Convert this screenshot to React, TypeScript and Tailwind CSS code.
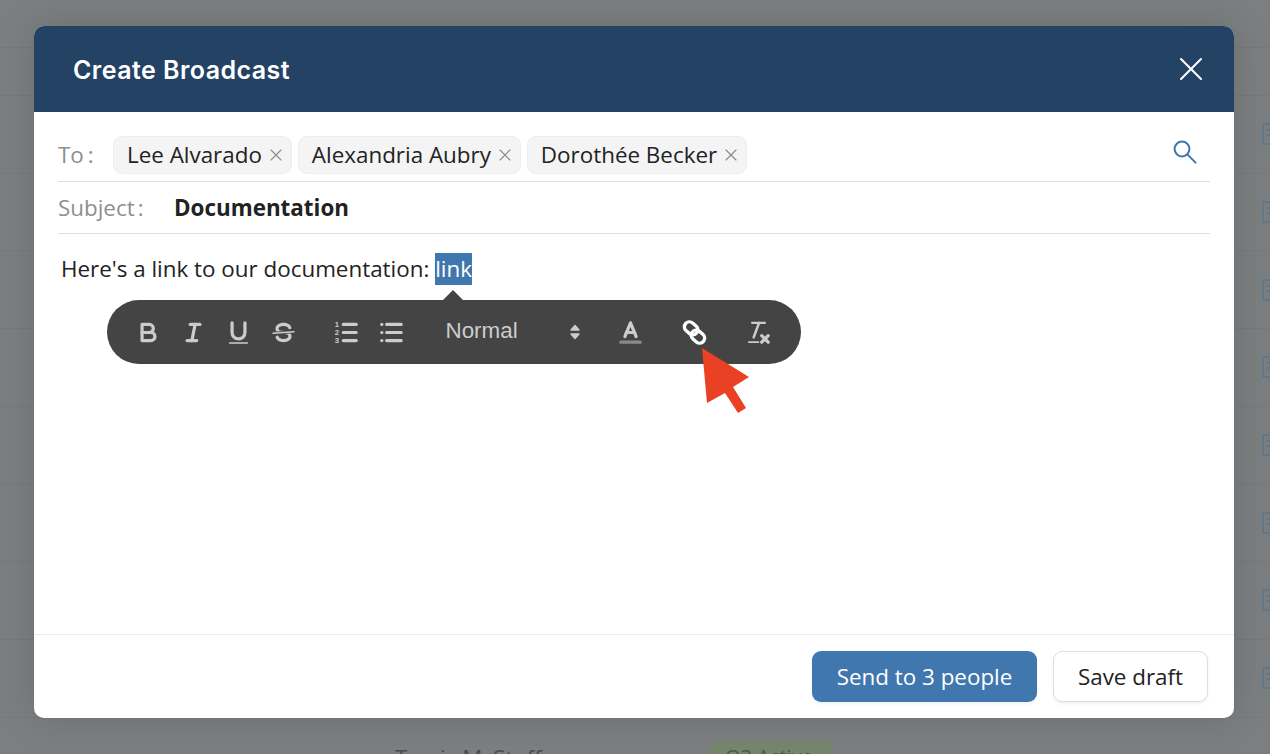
import { X } from 'lucide-react';

const rowKeys = [0, 1, 2, 3, 4, 5, 6, 7];

const tagNames = ['Lee Alvarado', 'Alexandria Aubry', 'Dorothée Becker'];

// Quill bubble toolbar icons, 18x18 grid
const ToolIcon = ({ children }: { children: React.ReactNode }) => (
  <svg
    viewBox="0 0 18 18"
    className="w-[29px] h-[29px]"
    fill="none"
    stroke="#ccc"
    strokeWidth="2"
    strokeLinecap="round"
    strokeLinejoin="round"
  >
    {children}
  </svg>
);

const BoldIcon = () => (
  <ToolIcon>
    <path d="M5,4H9.5A2.5,2.5,0,0,1,12,6.5v0A2.5,2.5,0,0,1,9.5,9H5V4Z" />
    <path d="M5,9h5.5A2.5,2.5,0,0,1,13,11.5v0A2.5,2.5,0,0,1,10.5,14H5V9Z" />
  </ToolIcon>
);

const ItalicIcon = () => (
  <ToolIcon>
    <line x1="7" x2="13" y1="4" y2="4" />
    <line x1="5" x2="11" y1="14" y2="14" />
    <line x1="8" x2="10" y1="14" y2="4" />
  </ToolIcon>
);

const UnderlineIcon = () => (
  <ToolIcon>
    <path d="M5,3V9a4,4,0,0,0,4,4H9a4,4,0,0,0,4-4V3" />
    <rect x="3" y="15" width="12" height="1" rx="0.5" fill="#ccc" stroke="none" />
  </ToolIcon>
);

const StrikeIcon = () => (
  <ToolIcon>
    <line x1="15.5" x2="2.5" y1="8.5" y2="9.5" strokeWidth="1" />
    <path
      stroke="none"
      fill="#ccc"
      d="M9.007,8C6.542,7.791,6,7.519,6,6.5,6,5.792,7.283,5,9,5c1.571,0,2.765.679,2.969,1.309a1,1,0,0,0,1.9-.617C13.356,4.106,11.354,3,9,3,6.2,3,4,4.538,4,6.5a3.2,3.2,0,0,0,.5,1.843Z"
    />
    <path
      stroke="none"
      fill="#ccc"
      d="M8.984,10C11.457,10.208,12,10.479,12,11.5c0,.708-1.283,1.5-3,1.5-1.571,0-2.765-.679-2.969-1.309a1,1,0,1,0-1.9.617C4.644,13.894,6.646,15,9,15c2.8,0,5-1.538,5-3.5a3.2,3.2,0,0,0-.5-1.843Z"
    />
  </ToolIcon>
);

const OrderedIcon = () => (
  <ToolIcon>
    <line x1="7" x2="15" y1="4" y2="4" />
    <line x1="7" x2="15" y1="9" y2="9" />
    <line x1="7" x2="15" y1="14" y2="14" />
    <g fill="#ccc" stroke="none" fontSize="4.8" fontWeight="700" fontFamily="Liberation Sans, sans-serif" textAnchor="middle">
      <text x="3" y="5.4">1</text>
      <text x="3" y="10.4">2</text>
      <text x="3" y="15.4">3</text>
    </g>
  </ToolIcon>
);

const BulletIcon = () => (
  <ToolIcon>
    <line x1="6" x2="15" y1="4" y2="4" />
    <line x1="6" x2="15" y1="9" y2="9" />
    <line x1="6" x2="15" y1="14" y2="14" />
    <line x1="3" x2="3" y1="4" y2="4" />
    <line x1="3" x2="3" y1="9" y2="9" />
    <line x1="3" x2="3" y1="14" y2="14" />
  </ToolIcon>
);

const ColorIcon = () => (
  <ToolIcon>
    <polyline points="5.5 11.5 9 3 12.5 11.5" />
    <line x1="11.63" x2="6.38" y1="9" y2="9" />
    <line x1="3" x2="15" y1="15" y2="15" stroke="#8a8a8a" />
  </ToolIcon>
);

const LinkIcon = () => (
  <ToolIcon>
    <g stroke="#fff" strokeWidth="2.1">
      <rect x="2.4" y="3.3" width="9" height="6.2" rx="3.1" transform="rotate(40 6.9 6.4)" />
      <rect x="6.6" y="8.5" width="9" height="6.2" rx="3.1" transform="rotate(40 11.1 11.6)" />
    </g>
  </ToolIcon>
);

const CleanIcon = () => (
  <ToolIcon>
    <line x1="5" x2="13" y1="3" y2="3" strokeWidth="1.4" />
    <line x1="6" x2="9.35" y1="12" y2="3" strokeWidth="1.6" />
    <line x1="3" x2="9" y1="15" y2="15" strokeWidth="1" />
    <line x1="11" x2="15" y1="11" y2="15" />
    <line x1="15" x2="11" y1="11" y2="15" />
  </ToolIcon>
);

const ToolButton = ({ wide, children }: { wide?: boolean; children: React.ReactNode }) => (
  <button className={wide ? 'w-[64px] h-[29px] flex items-center justify-center' : 'w-[45px] h-[29px] flex items-center justify-center'}>
    {children}
  </button>
);

const BackgroundPage = () => (
  <div className="h-[754px] overflow-hidden bg-[#7b7f80]">
    <div className="h-[48px] border-b border-[#777a7a]" />
    <div className="h-[48px] border-b border-[#777a7a]" />
    {rowKeys.map((key) => (
      <div key={key} className="h-[77.7px] border-b border-[#777a7a] flex items-center justify-end">
        <svg viewBox="0 0 22 22" className="w-[22px] h-[22px] shrink-0 mr-[-14px]" fill="none" stroke="#65778b" strokeWidth="2">
          <path d="M1 1h20v14l-6 6H1z" />
          <path d="M5 7h12M5 12h12M12 21v-6h8" />
        </svg>
      </div>
    ))}
    <div className="pl-[395px] pt-[23px] text-[22.4px] text-[#4c4e4e] whitespace-nowrap">Travis McStoffer</div>
  </div>
);

export default function App() {
  return (
    <div className="relative h-[754px] w-full overflow-hidden font-['Open_Sans',sans-serif]">
      <BackgroundPage />

      {/* the pill of the row behind the modal */}
      <div className="absolute left-[709px] top-[740px] w-[124px] h-[40px] rounded-[10px] bg-[#76866c] text-[20px] leading-[30px] text-[#4c5a4c] pl-[16px] pt-[2px]">
        Q3 Active
      </div>

      {/* dialog */}
      <div className="absolute left-[34px] top-[26px] w-[1200px] h-[692px] rounded-[10px] bg-white flex flex-col shadow-[0_0_40px_rgba(0,0,0,0.14)]">
        <div className="h-[86px] shrink-0 rounded-t-[10px] bg-[#234264] flex items-center justify-between pl-[39px] pr-[23px]">
          <span className="pt-[4px] text-[25px] font-semibold tracking-[0.45px] text-white font-['Inter',sans-serif]">Create Broadcast</span>
          <X className="w-[40px] h-[40px] text-white" strokeWidth={1.25} />
        </div>

        <div className="flex-1 flex flex-col px-[24px] min-h-0">
          <div className="h-[70px] shrink-0 flex items-center border-b border-[#dedede] pt-[23px] pb-[6px]">
            <span className="w-[55px] text-[22.4px] text-[#8f8f8f] shrink-0">
              To<span className="ml-[4px]">:</span>
            </span>
            <div className="flex gap-[6px]">
              {tagNames.map((name) => (
                <span key={name} className="h-[38px] flex items-center gap-[4px] pl-[13px] pr-[5px] rounded-[9px] bg-[#f4f4f4] border border-[#ededed] text-[22.4px] text-[#222]">
                  {name}
                  <X className="w-[20px] h-[20px] text-[#8d8d8d]" strokeWidth={1.4} />
                </span>
              ))}
            </div>
            <svg viewBox="0 0 24 24" className="w-[24px] h-[24px] ml-auto mr-[13px] mb-[6px]" fill="none" stroke="#3f77ae" strokeWidth="2" strokeLinecap="round">
              <circle cx="9" cy="9" r="7.4" />
              <line x1="14.6" y1="14.6" x2="22.6" y2="22.6" />
            </svg>
          </div>

          <div className="h-[52px] shrink-0 flex items-center border-b border-[#dedede]">
            <span className="w-[116px] text-[22.4px] text-[#8f8f8f] shrink-0">
              Subject<span className="ml-[3px]">:</span>
            </span>
            <span className="text-[22.4px] font-bold text-[#222]">Documentation</span>
          </div>

          <div className="relative flex-1 pt-[19px] pl-[3px] text-[22.4px] text-[#222]">
            <div className="leading-[32px]">
              Here's a link to our documentation: <span className="inline-block h-[32px] align-top leading-[32px] bg-[#3f77ae] text-white">link</span>
            </div>

            <div className="absolute left-[49px] top-[66px] w-[694px] h-[64px] rounded-[32px] bg-[#444] flex items-center pl-[18.5px]">
              <div className="absolute left-[336px] top-[-10px] w-0 h-0 border-x-[10px] border-x-transparent border-b-[10px] border-b-[#444]" />
              <div className="flex">
                <ToolButton><BoldIcon /></ToolButton>
                <ToolButton><ItalicIcon /></ToolButton>
                <ToolButton><UnderlineIcon /></ToolButton>
                <ToolButton><StrikeIcon /></ToolButton>
              </div>
              <div className="flex ml-[18px]">
                <ToolButton><OrderedIcon /></ToolButton>
                <ToolButton><BulletIcon /></ToolButton>
              </div>
              <div className="w-[153px] ml-[32px] flex items-center justify-between pr-[18px] text-[#ccc] text-[22.4px] font-['Liberation_Sans',sans-serif]">
                <span className="pb-[3px]">Normal</span>
                <svg viewBox="0 0 12 18" className="w-[12px] h-[18px]" fill="#ccc" stroke="#ccc" strokeWidth="1.4" strokeLinejoin="round">
                  <path d="M6 2.5 10 7H2zM2 11h8l-4 4.5z" />
                </svg>
              </div>
              <ToolButton wide><ColorIcon /></ToolButton>
              <ToolButton wide><LinkIcon /></ToolButton>
              <ToolButton wide><CleanIcon /></ToolButton>
            </div>
          </div>
        </div>

        <div className="h-[84px] shrink-0 border-t border-[#ececec] flex items-start justify-end gap-[16px] pt-[16px] pr-[26px]">
          <button className="h-[51px] w-[225px] rounded-[9px] bg-[#3f77ae] text-white text-[22.4px] shadow-[0_2px_3px_rgba(0,0,0,0.06)]">Send to 3 people</button>
          <button className="h-[51px] w-[155px] rounded-[9px] bg-white border border-[#dedede] text-[#222] text-[22.4px] shadow-[0_2px_3px_rgba(0,0,0,0.06)]">Save draft</button>
        </div>
      </div>

      {/* red pointer drawn over the toolbar */}
      <svg className="absolute left-0 top-0 w-[1270px] h-[754px] pointer-events-none" viewBox="0 0 1270 754">
        <polygon points="702,348 749,377 733,387 746,408 738,413 725,393 707,403" fill="#ea4125" />
      </svg>
    </div>
  );
}
